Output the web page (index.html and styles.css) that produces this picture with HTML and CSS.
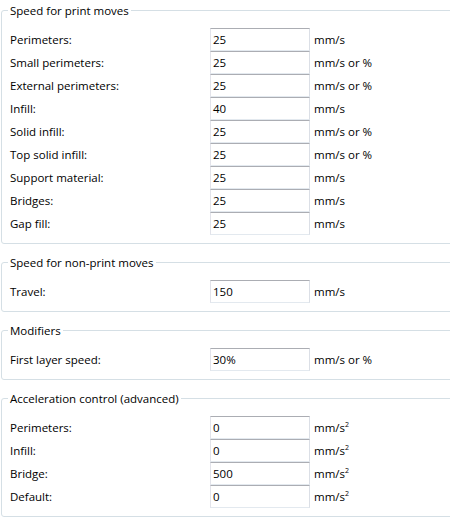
FILE: index.html
```html
<!DOCTYPE html>
<html>
<head>
<meta charset="utf-8">
<link rel="stylesheet" href="styles.css">
</head>
<body>
<div class="page">
  <section class="group">
    <div class="title">Speed for print moves</div>
    <div class="rows">
      <label>Perimeters:</label><div class="field">25</div><span class="unit">mm/s</span>
      <label>Small perimeters:</label><div class="field">25</div><span class="unit">mm/s or %</span>
      <label>External perimeters:</label><div class="field">25</div><span class="unit">mm/s or %</span>
      <label>Infill:</label><div class="field">40</div><span class="unit">mm/s</span>
      <label>Solid infill:</label><div class="field">25</div><span class="unit">mm/s or %</span>
      <label>Top solid infill:</label><div class="field">25</div><span class="unit">mm/s or %</span>
      <label>Support material:</label><div class="field">25</div><span class="unit">mm/s</span>
      <label>Bridges:</label><div class="field">25</div><span class="unit">mm/s</span>
      <label>Gap fill:</label><div class="field">25</div><span class="unit">mm/s</span>
    </div>
  </section>
  <section class="group">
    <div class="title">Speed for non-print moves</div>
    <div class="rows">
      <label>Travel:</label><div class="field">150</div><span class="unit">mm/s</span>
    </div>
  </section>
  <section class="group">
    <div class="title">Modifiers</div>
    <div class="rows">
      <label>First layer speed:</label><div class="field">30%</div><span class="unit">mm/s or %</span>
    </div>
  </section>
  <section class="group">
    <div class="title">Acceleration control (advanced)</div>
    <div class="rows">
      <label>Perimeters:</label><div class="field">0</div><span class="unit">mm/s<sup>2</sup></span>
      <label>Infill:</label><div class="field">0</div><span class="unit">mm/s<sup>2</sup></span>
      <label>Bridge:</label><div class="field">500</div><span class="unit">mm/s<sup>2</sup></span>
      <label>Default:</label><div class="field">0</div><span class="unit">mm/s<sup>2</sup></span>
    </div>
  </section>
</div>
</body>
</html>
```

FILE: styles.css
```css
html, body {
  margin: 0;
  padding: 0;
  background: #ffffff;
  overflow: hidden;
}
body {
  font-family: "Open Sans", "Noto Sans", "DejaVu Sans", sans-serif;
  font-size: 11.5px;
  color: #000000;
}
.page {
  display: flex;
  flex-direction: column;
  gap: 18px;
  padding-top: 10px;
  margin-left: 1px;
  margin-right: -4px;
}
.group {
  border: 1px solid #d5dfe5;
  border-radius: 3px;
  padding: 0 0 8px 8px;
}
.title {
  display: block;
  width: max-content;
  margin-top: -8px;
  margin-left: -2px;
  padding: 0 2px;
  height: 16px;
  line-height: 16px;
  background: #ffffff;
}
.rows {
  display: grid;
  grid-template-columns: 200px 100px auto;
  grid-auto-rows: 23px;
  align-items: center;
  margin-top: 9px;
}
.rows label {
  white-space: nowrap;
}
.field {
  box-sizing: border-box;
  height: 23px;
  border-style: solid;
  border-width: 1px;
  border-color: #abadb3 #dbdfe6 #e3e9ef #e2e3ea;
  padding-left: 2px;
  line-height: 21px;
  background: #ffffff;
}
.unit {
  padding-left: 4px;
  white-space: nowrap;
}
.unit sup {
  font-size: 7px;
  vertical-align: 5px;
  line-height: 0;
}
```
